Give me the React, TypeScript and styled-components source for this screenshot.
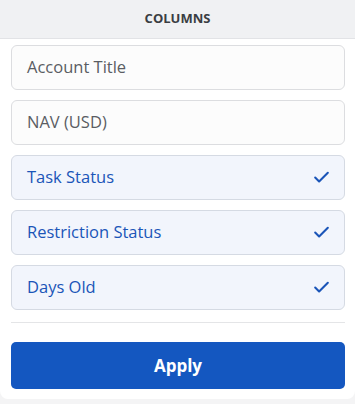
import React, { useState } from "react";
import styled, { createGlobalStyle } from "styled-components";
import { Check } from "lucide-react";

const Global = createGlobalStyle`
  html, body { margin: 0; padding: 0; background: #f4f4f5; }
  body { font-family: "Open Sans", "Lato", sans-serif; }
  * { box-sizing: border-box; }
`;

const Panel = styled.div`
  width: 355px;
  background: #ffffff;
  border-radius: 0 0 8px 8px;
  padding-bottom: 10px;
`;

const Header = styled.div`
  height: 39px;
  padding-bottom: 3px;
  background: #f0f1f3;
  border-bottom: 1px solid #e2e3e6;
  display: flex;
  align-items: center;
  justify-content: center;
  font-size: 13px;
  font-weight: 700;
  color: #3a3d42;
`;

const Body = styled.div`
  padding: 6px 10px 0 11px;
  display: flex;
  flex-direction: column;
`;

const List = styled.div`
  display: flex;
  flex-direction: column;
  gap: 10px;
`;

const Item = styled.button<{ $selected: boolean }>`
  height: 45px;
  width: 100%;
  display: flex;
  align-items: center;
  justify-content: space-between;
  padding: 0 13px 0 15px;
  border: 1px solid ${(p) => (p.$selected ? "#d5dae3" : "#dcdde0")};
  border-radius: 6px;
  background: ${(p) => (p.$selected ? "#f2f5fc" : "#fcfcfc")};
  color: ${(p) => (p.$selected ? "#1b55b8" : "#5a5d63")};
  font-family: inherit;
  font-size: 16.5px;
  text-align: left;
  cursor: pointer;
`;

const Label = styled.span`
  margin-bottom: 2px;
`;

const Divider = styled.div`
  height: 1px;
  background: #e4e5e7;
  margin-top: 12px;
`;

const ApplyButton = styled.button`
  margin-top: 19px;
  height: 47px;
  width: 100%;
  border: none;
  border-radius: 5px;
  background: #1457c0;
  color: #ffffff;
  font-family: inherit;
  font-size: 17px;
  font-weight: 700;
  cursor: pointer;
`;

const columns = [
  { label: "Account Title", selected: false },
  { label: "NAV (USD)", selected: false },
  { label: "Task Status", selected: true },
  { label: "Restriction Status", selected: true },
  { label: "Days Old", selected: true },
];

export default function App() {
  const [items, setItems] = useState(columns);
  return (
    <>
      <Global />
      <Panel>
        <Header>COLUMNS</Header>
        <Body>
          <List>
            {items.map((c, i) => (
              <Item
                key={c.label}
                $selected={c.selected}
                onClick={() =>
                  setItems(items.map((x, j) => (j === i ? { ...x, selected: !x.selected } : x)))
                }
              >
                <Label>{c.label}</Label>
                {c.selected && <Check size={19} strokeWidth={2.6} color="#1b55b8" />}
              </Item>
            ))}
          </List>
          <Divider />
          <ApplyButton>Apply</ApplyButton>
        </Body>
      </Panel>
    </>
  );
}
